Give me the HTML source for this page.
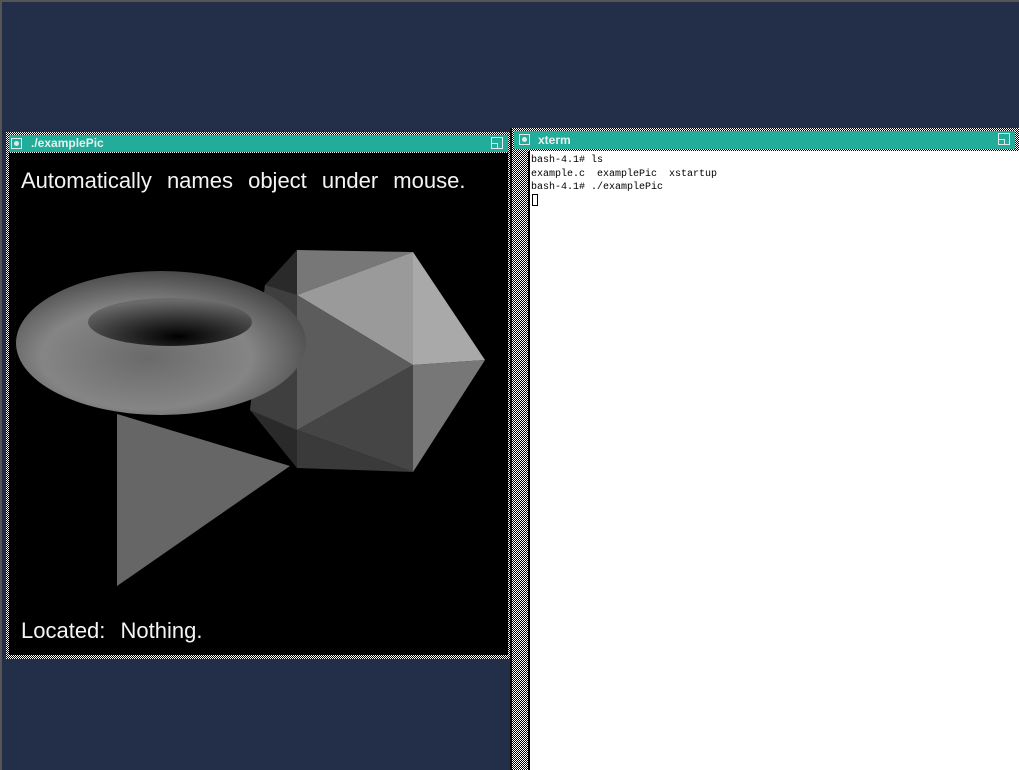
<!DOCTYPE html>
<html><head><style>
*{margin:0;padding:0;box-sizing:border-box}
body{width:1019px;height:770px;background:#232f48;position:relative;overflow:hidden;font-family:"Liberation Sans",sans-serif}
.chk{background:repeating-conic-gradient(#000 0 25%,#fff 0 50%) 0 0/2px 2px}
.abs{position:absolute}
.tb{background:#22ad9a;color:#e8f0ee;font-weight:bold;font-size:12px}
.ic{position:absolute;width:11px;height:11px;border:1px solid #e0e8e6;}
.ic i{position:absolute;left:2px;top:2px;width:5px;height:5px;border-radius:50%;background:#e0e8e6}
.mx{position:absolute;width:12px;height:12px;border:1px solid #e0e8e6}
.mx i{position:absolute;left:0;top:5px;width:6px;height:6px;border-top:1px solid #e0e8e6;border-right:1px solid #e0e8e6}
.term{font-family:"Liberation Mono",monospace;font-size:10px;line-height:13.5px;color:#000}
.big{color:#f4f4f4;font-size:22px;font-weight:normal;letter-spacing:0;word-spacing:9px;white-space:nowrap}
</style></head><body>
<div class="abs" style="left:0;top:0;width:1019px;height:2px;background:#555"></div>
<div class="abs" style="left:0;top:0;width:2px;height:770px;background:#555"></div>
<!-- left window -->
<div class="abs chk" style="left:6px;top:132px;width:505px;height:527px"></div>
<div class="abs tb" style="left:9px;top:135px;width:499px;height:17px">
 <div class="ic" style="left:2px;top:3px"><i></i></div>
 <span class="abs" style="left:22px;top:1px">./examplePic</span>
 <div class="mx" style="left:482px;top:2px"><i></i></div>
</div>
<div class="abs" style="left:9px;top:153px;width:499px;height:502px;background:#000;overflow:hidden">
 <div class="abs big" style="left:12px;top:15px">Automatically names object under mouse.</div>
 <div class="abs big" style="left:12px;top:465px">Located: Nothing.</div>
</div>
<svg class="abs" style="left:0;top:0" width="1019" height="770">
<defs>
<radialGradient id="tg" cx="0.45" cy="0.6" r="0.6"><stop offset="0" stop-color="#6a6a6a"/><stop offset="0.6" stop-color="#858585"/><stop offset="1" stop-color="#4a4a4a"/></radialGradient>
<radialGradient id="hg" cx="0.55" cy="0.8" r="0.75"><stop offset="0" stop-color="#000"/><stop offset="0.5" stop-color="#333"/><stop offset="1" stop-color="#6a6a6a"/></radialGradient>
</defs>
<polygon points="117,414 290,466 117,586" fill="#666"/>
<polygon points="297,250 265,285 250,410 297,468" fill="#2a2a2a"/>
<polygon points="297,250 413,252 297,295" fill="#777"/>
<polygon points="297,295 413,252 413,365" fill="#9a9a9a"/>
<polygon points="413,252 485,360 413,365" fill="#a9a9a9"/>
<polygon points="413,365 485,360 413,472" fill="#777"/>
<polygon points="297,430 413,365 413,472" fill="#454545"/>
<polygon points="297,295 413,365 297,430" fill="#5c5c5c"/>
<polygon points="297,430 413,472 297,468" fill="#3a3a3a"/>
<polygon points="265,285 297,295 297,430 250,410" fill="#3f3f3f"/>
<ellipse cx="161" cy="343" rx="145" ry="72" fill="url(#tg)"/>
<ellipse cx="170" cy="322" rx="82" ry="24" fill="url(#hg)"/>
</svg>
<!-- right window -->
<div class="abs chk" style="left:512px;top:128px;width:507px;height:642px"></div>
<div class="abs" style="left:510px;top:128px;width:2px;height:642px;background:#111"></div>
<div class="abs tb" style="left:514px;top:131px;width:501px;height:18px">
 <div class="ic" style="left:5px;top:3px"><i></i></div>
 <span class="abs" style="left:24px;top:2px">xterm</span>
 <div class="mx" style="left:484px;top:2px"><i></i></div>
</div>
<div class="abs" style="left:528px;top:151px;width:2px;height:619px;background:#000"></div>
<div class="abs" style="left:530px;top:151px;width:489px;height:619px;background:#fff">
 <div class="abs term" style="left:1px;top:3px;white-space:pre">bash-4.1# ls
example.c  examplePic  xstartup
bash-4.1# ./examplePic</div>
 <div class="abs" style="left:2px;top:43px;width:6px;height:12px;border:1px solid #000"></div>
</div>
</body></html>
